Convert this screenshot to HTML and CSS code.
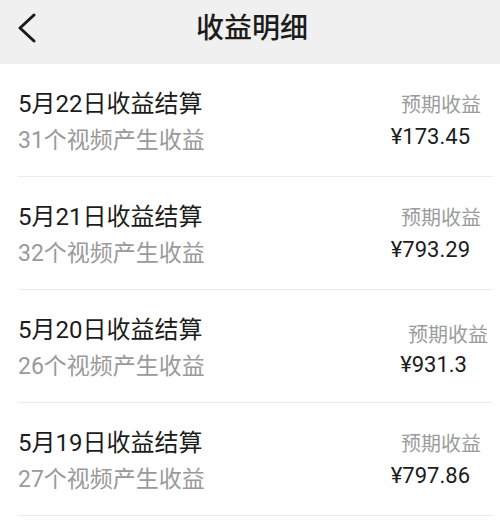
FILE: index.html
```html
<!DOCTYPE html>
<html lang="zh-CN">
<head>
<meta charset="utf-8">
<title>收益明细</title>
<link rel="stylesheet" href="styles.css">
</head>
<body>
<header class="topbar">
  <div class="topbar__back">
    <svg width="20" height="32" viewBox="0 0 20 32" aria-hidden="true">
      <polyline points="16,2 2,15 16,28" fill="none" stroke="#1c1c1c" stroke-width="3" stroke-linecap="round" stroke-linejoin="round"/>
    </svg>
  </div>
  <h1 class="topbar__title">收益明细</h1>
  <div class="topbar__spacer"></div>
</header>
<main class="list">
  <div class="row">
    <div class="row__main">
      <div class="row__title">5月22日收益结算</div>
      <div class="row__sub">31个视频产生收益</div>
    </div>
    <div class="row__side">
      <div class="row__label">预期收益</div>
      <div class="row__amount">¥173.45</div>
    </div>
  </div>
  <div class="row">
    <div class="row__main">
      <div class="row__title">5月21日收益结算</div>
      <div class="row__sub">32个视频产生收益</div>
    </div>
    <div class="row__side">
      <div class="row__label">预期收益</div>
      <div class="row__amount">¥793.29</div>
    </div>
  </div>
  <div class="row row--shift">
    <div class="row__main">
      <div class="row__title">5月20日收益结算</div>
      <div class="row__sub">26个视频产生收益</div>
    </div>
    <div class="row__side">
      <div class="row__label">预期收益</div>
      <div class="row__amount">¥931.3</div>
    </div>
  </div>
  <div class="row">
    <div class="row__main">
      <div class="row__title">5月19日收益结算</div>
      <div class="row__sub">27个视频产生收益</div>
    </div>
    <div class="row__side">
      <div class="row__label">预期收益</div>
      <div class="row__amount">¥797.86</div>
    </div>
  </div>
</main>
</body>
</html>
```
FILE: styles.css
```css
* { box-sizing: border-box; }
html, body {
  margin: 0;
  padding: 0;
  background: #ffffff;
}
body {
  font-family: Roboto, "Noto Sans CJK SC", sans-serif;
  color: #1c1c1c;
}
.topbar {
  height: 64px;
  background: #f0f0f0;
  display: grid;
  grid-template-columns: 1fr auto 1fr;
  align-items: start;
}
.topbar__back {
  padding: 13px 0 0 18px;
  display: flex;
}
.topbar__title {
  margin: 0 0 0 4px;
  font-size: 28px;
  font-weight: 500;
  line-height: 58px;
  color: #1c1c1c;
  letter-spacing: 0;
}
.list {
  padding: 0 7px 0 18px;
}
.row {
  height: 113px;
  border-bottom: 1px solid #ececec;
  display: flex;
  justify-content: space-between;
  align-items: flex-start;
  padding: 23px 12px 0 0;
}
.row__main {
  display: flex;
  flex-direction: column;
  gap: 3px;
}
.row__title {
  font-size: 24px;
  line-height: 34px;
  color: #1c1c1c;
}
.row__sub {
  font-size: 23px;
  line-height: 34px;
  color: #9a9a9a;
}
.row__side {
  margin-top: 4px;
  display: flex;
  flex-direction: column;
  align-items: flex-end;
}
.row__label {
  font-size: 20px;
  line-height: 28px;
  color: #9c9c9c;
}
.row__amount {
  font-size: 22px;
  line-height: 32px;
  color: #1c1c1c;
  margin: 2px 11px 0 0;
}
.row--shift .row__side {
  margin-top: 8px;
}
.row--shift .row__label {
  margin-right: -7px;
}
.row--shift .row__amount {
  margin-right: 14px;
  margin-top: 0;
}
```
